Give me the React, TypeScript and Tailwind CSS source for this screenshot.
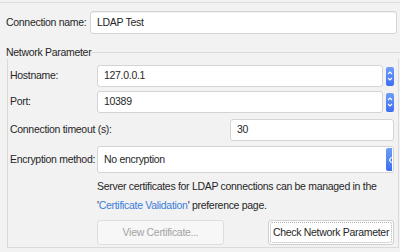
export default function App() {
  return (
    <div className="w-[400px] h-[252px] overflow-hidden whitespace-nowrap bg-[#f2f2f2] text-[10.5px] tracking-[-0.3px] text-[#262626] font-['Liberation_Sans',Arial,sans-serif]">
      <div className="h-[2px]" />
      <div className="border-t border-[#dddddd]" />

      {/* Connection name */}
      <div className="flex items-center pl-[6px] pr-[3px] mt-[8px]">
        <span className="w-[84px] shrink-0">Connection name:</span>
        <div className="flex-1 h-[23px] flex items-center px-[6px] bg-white border border-[#d4d4d4] rounded-[3px] shadow-[inset_0_1px_1px_rgba(0,0,0,0.06)]">
          LDAP Test
        </div>
      </div>

      {/* Network Parameter group */}
      <div className="mt-[12px] flex items-center h-[13px] pl-[6px]">
        <span className="pr-[1px]">Network Parameter</span>
        <div className="flex-1 border-t border-[#dadada]" />
      </div>
      <div className="ml-[7px] mr-[1px] h-[189px] border-l border-r border-b border-[#dadada] pl-[2px] pr-[4px] pt-[6px]">
        {/* Hostname */}
        <div className="flex items-center h-[22px]">
          <span className="w-[87px] shrink-0">Hostname:</span>
          <div className="flex-1 h-[22px] flex items-center px-[6px] bg-white border border-[#d4d4d4] rounded-[3px]">
            127.0.0.1
          </div>
          <Spinner />
        </div>

        {/* Port */}
        <div className="flex items-center h-[22px] mt-[4px]">
          <span className="w-[87px] shrink-0">Port:</span>
          <div className="flex-1 h-[22px] flex items-center px-[6px] bg-white border border-[#d4d4d4] rounded-[3px]">
            10389
          </div>
          <Spinner />
        </div>

        {/* Timeout */}
        <div className="flex items-center h-[22px] mt-[6px]">
          <span className="flex-1">Connection timeout (s):</span>
          <div className="w-[164px] h-[22px] flex items-center px-[6px] bg-white border border-[#d4d4d4] rounded-[3px]">
            30
          </div>
        </div>

        {/* Encryption */}
        <div className="flex items-center h-[27px] mt-[5px]">
          <span className="w-[87px] shrink-0">Encryption method:</span>
          <div className="flex-1 h-[27px] flex items-center pl-[6px] pr-[1px] bg-white border border-[#d4d4d4] rounded-[3px]">
            <span className="flex-1">No encryption</span>
            <div className="w-[6px] h-[23px] bg-gradient-to-b from-[#6d9cf7] to-[#3d6ef0] rounded-l-[2px] flex items-center justify-end">
              <svg width="4" height="8" viewBox="0 0 4 8">
                <path d="M3.5 1 L1.5 4 L3.5 7" stroke="white" strokeWidth="1.2" fill="none" />
              </svg>
            </div>
          </div>
        </div>

        {/* Info text */}
        <div className="pl-[87px] mt-[4px] leading-[19px]">
          <div>Server certificates for LDAP connections can be managed in the</div>
          <div>
            '<span className="text-[#3b7dd8]">Certificate Validation</span>' preference page.
          </div>
        </div>

        {/* Buttons */}
        <div className="flex items-center pl-[87px] mt-[5px]">
          <div className="w-[127px] h-[25px] flex items-center justify-center bg-[#f7f7f7] border border-[#dedede] rounded-[3px] text-[#a3a3a3]">
            View Certificate...
          </div>
          <div className="flex-1" />
          <div className="relative w-[126px] h-[25px] flex items-center justify-center bg-white border border-[#cfcfcf] rounded-[3px]">
            Check Network Parameter
            <span className="absolute inset-[1px] border border-dotted border-[#b0b0b0] rounded-[2px]" />
          </div>
        </div>
      </div>
    </div>
  );
}

function Spinner() {
  return (
    <div className="ml-[3px] w-[8px] h-[19px] shrink-0 rounded-[2px] bg-gradient-to-b from-[#6d9cf7] to-[#3d6ef0] flex items-center justify-center">
      <svg width="6" height="14" viewBox="0 0 6 14">
        <path d="M1 5 L3 3 L5 5" stroke="white" strokeWidth="1.1" fill="none" />
        <path d="M1 9 L3 11 L5 9" stroke="white" strokeWidth="1.1" fill="none" />
      </svg>
    </div>
  );
}
